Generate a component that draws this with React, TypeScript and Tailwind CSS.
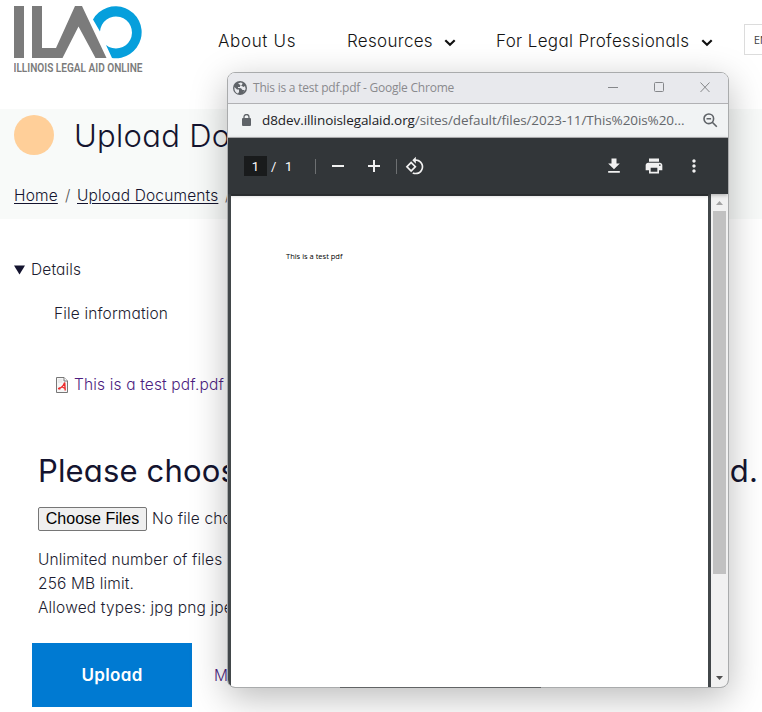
import React from "react";

function Logo() {
  return (
    <svg width="130" height="70" viewBox="0 0 130 70" className="block shrink-0">
      <path d="M0 0h10v52H0zM18 0h10v42h14L61 0h7l24.500 52H81.500L64.500 20.500 48.500 52H18z" fill="#7b7b7b" />
      <path d="M79 13.500A26 26 0 1 1 98 52L92 39A16 16 0 1 0 86 25.500z" fill="#069fdc" />
      <text x="-0.500" y="66.300" fontSize="12.400" fontWeight="600" textLength="129" lengthAdjust="spacingAndGlyphs" fill="#7b7b7b" fontFamily="Roboto, sans-serif">
        ILLINOIS LEGAL AID ONLINE
      </text>
    </svg>
  );
}

function Chevron() {
  return (
    <svg width="12" height="8" viewBox="0 0 12 8" fill="none" stroke="#111" strokeWidth="2.200" className="mt-px block">
      <path d="M1.300 1.300 6 5.800l4.700-4.500" />
    </svg>
  );
}

function Header() {
  return (
    <header className="flex h-[109px] items-start overflow-hidden pl-[14px] pt-[6px]">
      <Logo />
      <nav className="mt-[22px] flex h-7 items-center whitespace-nowrap text-[17px] font-light text-[#141414]">
        <span className="ml-[74px] w-[129px] tracking-[0.650px]">About Us</span>
        <span className="w-[97px] tracking-[0.3px]">Resources</span>
        <Chevron />
        <span className="ml-[40px] w-[205px] tracking-[0.350px]">For Legal Professionals</span>
        <Chevron />
      </nav>
      <div className="ml-[31px] mt-[18px] h-[31px] w-12 shrink-0 border border-[#dcdcdc] pl-[9px] text-[10px] leading-[30px] text-[#444]">EN</div>
    </header>
  );
}

function TitleBand() {
  return (
    <section className="h-[110px] overflow-hidden whitespace-nowrap bg-[#f8faf9] pl-[14px] pt-[6px]">
      <div className="flex h-10 items-center">
        <div className="size-10 rounded-full bg-[#ffcf99]" />
        <h1 className="ml-5 mt-[2px] text-[31px] font-light tracking-[0.3px] text-[#14142f]">Upload Documents</h1>
      </div>
      <div className="mt-[29px] flex h-6 items-center text-[15.500px] font-light tracking-[0.160px] text-[#14142f]">
        <a className="w-[44px] underline underline-offset-[2px]">Home</a>
        <span className="ml-[7px] w-3 text-[#555]">/</span>
        <a className="w-[142px] underline underline-offset-[2px]">Upload Documents</a>
        <span className="ml-[6px] text-[#555]">/</span>
      </div>
    </section>
  );
}

function PdfIcon() {
  return (
    <svg width="12" height="16" viewBox="0 0 12 16" className="block shrink-0">
      <path d="M.5.5h7.500l3.500 3.500v11.500H.5z" fill="#f6f6f6" stroke="#777" />
      <path d="M8 .5V4h3.500" fill="#fff" stroke="#777" />
      <path d="M2 3h4.500M2 5h4.500" stroke="#ddd" />
      <path d="M2 11.800c2-.3 5-1.600 6.700-6.300l.5 8M5.500 9.500l3.500 2M3 10.500l1 2" fill="none" stroke="#ec2b2b" strokeWidth="1.400" />
    </svg>
  );
}

function UploadForm() {
  return (
    <main className="whitespace-nowrap text-[15.500px] font-light tracking-[0.150px] text-[#1c1c30]">
      <div className="mt-[39px] flex h-6 items-center pl-[14px]">
        <svg width="11" height="10" viewBox="0 0 11 10"><path d="M0 .5h11L5.500 9.500z" fill="#14142f" /></svg>
        <span className="ml-[6px]">Details</span>
      </div>
      <p className="mt-5 pl-[54px] leading-6">File information</p>
      <div className="mt-[47px] flex h-6 items-center pl-[56px]">
        <PdfIcon />
        <a className="ml-[6px] text-[#4c1d80]">This is a test pdf.pdf</a>
      </div>
      <h2 className="mt-[54px] flex h-10 items-center pl-[38px] text-[31px] font-normal text-[#14142f]">
        <span>Please choose the documents</span>
        <span className="ml-auto mr-[4px]">to upload.</span>
      </h2>
      <div className="mt-[16px] flex h-6 items-center pl-[38px]">
        <button className="h-6 w-[109px] rounded-[2px] border border-[#767676] bg-[#efefef] font-['Liberation_Sans',sans-serif] text-[16px] font-normal leading-5 tracking-normal text-black">Choose Files</button>
        <span className="ml-[5px]">No file chosen</span>
      </div>
      <div className="mt-[17px] pl-[38px] leading-6">
        <p>Unlimited number of files can be uploaded to this field.</p>
        <p>256 MB limit.</p>
        <p>Allowed types: jpg png jpeg pdf doc docx.</p>
      </div>
      <div className="mt-[23px] flex h-16 items-center pl-8">
        <button className="h-16 w-40 bg-[#007ad2] pt-px text-[17px] font-semibold tracking-[0.350px] text-white">Upload</button>
        <a className="ml-[22px] pt-px text-[#4c1d80]">My uploads</a>
      </div>
    </main>
  );
}

function TitleBar() {
  return (
    <div className="flex h-[31px] shrink-0 items-center border-b border-[#b1b1b4] bg-[#e8e9ed] pl-[5px] text-[#8a8a8d]">
      <svg width="14" height="14" viewBox="0 0 14 14" className="-mt-px">
        <circle cx="7" cy="7" r="7" fill="#5f6368" />
        <path d="M1.500 6 4 8.500h2V11L5 12.500C2.500 12 1 9 1.500 6zM5 2.500 7.500 1.500l2 .5-.5 2-2 .5V6H5v1l3 .2 1.500 1.800L11.500 9 10 12l2.700-4-.7-3-1.500 1L9 5" fill="#e8e9ed" />
      </svg>
      <span className="ml-[6px] font-['Open_Sans',sans-serif] text-[12px] tracking-[-0.230px]">This is a test pdf.pdf - Google Chrome</span>
      <svg width="102" height="12" viewBox="0 0 102 12" fill="none" stroke="#85878a" className="-mt-[2px] ml-auto mr-[18px]">
        <path d="M0 6.500h10M92.500 1.500l9 9.500M101.500 1.500l-9 9.500" />
        <rect x="46.500" y="1.500" width="9" height="9" rx="1" />
      </svg>
    </div>
  );
}

function AddressBar() {
  return (
    <div className="flex h-[34px] shrink-0 items-center border-b border-[#b5b5b7] bg-[#f1f3f4] pl-[14px]">
      <svg width="9" height="12" viewBox="0 0 9 12" className="-mt-[2px]">
        <rect y="4" width="9" height="8" rx="1" fill="#5f6368" />
        <path d="M2 5V3a2.500 2.500 0 0 1 5 0v2" fill="none" stroke="#5f6368" strokeWidth="1.300" />
      </svg>
      <div className="ml-[11px] flex whitespace-nowrap font-['Open_Sans',sans-serif] text-[13.500px] tracking-[-0.080px] text-[#64676b]">
        <span className="text-[#202124]">d8dev.illinoislegalaid.org</span>
        <span>/sites/default/files/2023-11/This%20is%20...</span>
      </div>
      <svg width="15" height="15" viewBox="0 0 15 15" fill="none" stroke="#5f6368" strokeWidth="1.600" className="ml-auto mr-[10px] shrink-0">
        <circle cx="5.800" cy="5.800" r="4.800" />
        <path d="m9.300 9.300 4.500 4.500M3.500 5.800h4.600" />
      </svg>
    </div>
  );
}

function PdfToolbar() {
  return (
    <div className="relative z-10 flex h-14 shrink-0 items-center bg-[#323639] pl-4 text-[13px] text-white shadow-[0_1px_4px_rgba(0,0,0,0.3)]">
      <span className="h-5 w-[23px] bg-[#191b1c] text-center font-[Roboto,sans-serif] leading-[21px]">1</span>
      <span className="ml-[4px] w-[12px] pt-px font-[Roboto,sans-serif]">/</span>
      <span className="ml-[2px] w-2 pt-px font-[Roboto,sans-serif]">1</span>
      <i className="ml-[22px] h-[15px] w-px bg-[#6d7072]" />
      <svg width="50" height="14" viewBox="0 0 50 14" stroke="#f1f1f1" strokeWidth="2" className="ml-[15px]">
        <path d="M1 7h12M37 7h12M43 1v12" />
      </svg>
      <i className="ml-[15px] h-[15px] w-px bg-[#6d7072]" />
      <svg width="20" height="20" viewBox="0 0 24 24" fill="#f1f1f1" className="ml-[8px]">
        <path d="M7.340 6.410.860 12.900l6.490 6.480 6.490-6.480-6.500-6.490zM3.690 12.900l3.660-3.660L11 12.900l-3.660 3.660-3.650-3.660zm15.670-6.260C17.610 4.880 15.300 4 13 4V.760L8.760 5 13 9.240V6c1.790 0 3.580.680 4.950 2.050 2.730 2.730 2.730 7.170 0 9.900C16.580 19.320 14.790 20 13 20c-.970 0-1.940-.210-2.840-.610l-1.490 1.490C10.020 21.620 11.510 22 13 22c2.300 0 4.610-.880 6.360-2.640 3.520-3.510 3.520-9.210 0-12.720z" />
      </svg>
      <div className="ml-auto mr-[24px] flex items-center gap-5">
        <svg width="20" height="20" viewBox="0 0 24 24" fill="#f1f1f1"><path d="M19 9h-4V3H9v6H5l7 7 7-7zM5 18v2h14v-2H5z" /></svg>
        <svg width="20" height="20" viewBox="0 0 24 24" fill="#f1f1f1"><path d="M19 8H5c-1.660 0-3 1.340-3 3v6h4v4h12v-4h4v-6c0-1.660-1.340-3-3-3zm-3 11H8v-5h8v5zm3-7c-.550 0-1-.450-1-1s.450-1 1-1 1 .450 1 1-.450 1-1 1zm-1-9H6v4h12V3z" /></svg>
        <svg width="20" height="20" viewBox="0 0 24 24" fill="#f1f1f1"><path d="M12 8c1.100 0 2-.900 2-2s-.900-2-2-2-2 .900-2 2 .900 2 2 2zm0 2c-1.100 0-2 .900-2 2s.900 2 2 2 2-.900 2-2-.900-2-2-2zm0 6c-1.100 0-2 .900-2 2s.900 2 2 2 2-.900 2-2-.900-2-2-2z" /></svg>
      </div>
    </div>
  );
}

function PdfView() {
  return (
    <div className="flex min-h-0 flex-1 bg-[#42474a] pl-[3px]">
      <div className="flex-1 border-t-2 border-[#323639] bg-white pl-[55px] pt-[53px] font-['Open_Sans',sans-serif] text-[7.500px] font-medium leading-[14px] text-black">This is a test pdf</div>
      <div className="ml-[3px] flex w-[17px] flex-col items-center bg-[#f1f1f1]">
        <svg width="7" height="4" viewBox="0 0 7 4" className="mt-[7px]"><path d="M0 4 3.500 0 7 4z" fill="#a3a3a3" /></svg>
        <div className="mt-[6px] h-[363px] w-[13px] bg-[#c1c1c1]" />
        <svg width="7" height="4" viewBox="0 0 7 4" className="mb-[7px] mt-auto"><path d="M0 0h7L3.500 4z" fill="#505050" /></svg>
      </div>
    </div>
  );
}

export default function App() {
  return (
    <div className="relative h-[712px] w-[762px] overflow-hidden bg-white font-[Inter,sans-serif] [font-feature-settings:'cv11']">
      <Header />
      <TitleBand />
      <UploadForm />
      <div className="absolute left-[227px] top-[72px] flex h-[616px] w-[502px] flex-col overflow-hidden rounded-lg border border-[#a9abac]">
        <TitleBar />
        <AddressBar />
        <PdfToolbar />
        <PdfView />
      </div>
      <div className="pointer-events-none absolute left-[227px] top-[72px] h-[616px] w-[502px] rounded-lg shadow-[0_10px_36px_rgba(0,0,0,0.27)]" />
      <div className="absolute left-[340px] top-[687px] h-px w-[201px] bg-[#626465]" />
    </div>
  );
}
